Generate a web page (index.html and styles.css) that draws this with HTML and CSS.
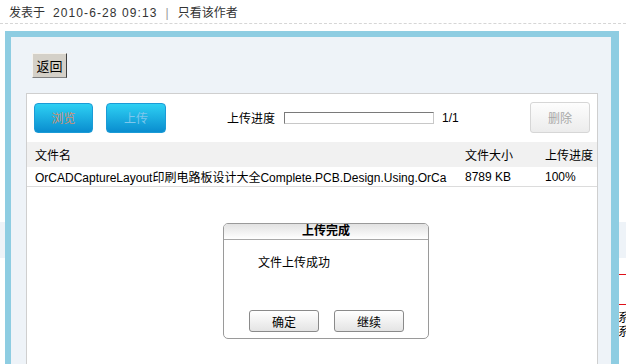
FILE: index.html
```html
<!DOCTYPE html>
<html lang="zh-CN">
<head>
<meta charset="utf-8">
<title>上传完成</title>
<link rel="stylesheet" href="styles.css">
</head>
<body>
<div class="backdrop">
  <div class="bd-band"></div>
  <div class="bd-line bd-line1"></div>
  <div class="bd-line bd-line2"></div>
  <div class="bd-text bd-t1">系</div>
  <div class="bd-text bd-t2">系</div>
</div>

<div class="meta">
  <span>发表于</span>
  <span class="date">2010-6-28 09:13</span>
  <span class="sep">|</span>
  <span>只看该作者</span>
</div>

<div class="frame">
  <button class="back-btn">返回</button>
  <div class="panel">
    <div class="toolbar">
      <button class="blue-btn browse">浏览</button>
      <button class="blue-btn upload">上传</button>
      <span class="prog-label">上传进度</span>
      <span class="prog-bar"></span>
      <span class="prog-count">1/1</span>
      <button class="del-btn">删除</button>
    </div>
    <div class="row head">
      <div class="cell name">文件名</div>
      <div class="cell size">文件大小</div>
      <div class="cell pct">上传进度</div>
    </div>
    <div class="row data">
      <div class="cell name"><span class="clip">OrCADCaptureLayout印刷电路板设计大全Complete.PCB.Design.Using.OrCa</span></div>
      <div class="cell size">8789 KB</div>
      <div class="cell pct">100%</div>
    </div>

    <div class="dialog">
      <div class="dlg-title">上传完成</div>
      <div class="dlg-msg">文件上传成功</div>
      <div class="dlg-actions">
        <button class="dlg-btn">确定</button>
        <button class="dlg-btn">继续</button>
      </div>
    </div>
  </div>
</div>
</body>
</html>
```

FILE: styles.css
```css
html, body {
  margin: 0;
  padding: 0;
}
body {
  width: 626px;
  height: 364px;
  overflow: hidden;
  position: relative;
  background: #fff;
  color: #000;
  font: 12px "Liberation Sans", "Noto Sans CJK SC", sans-serif;
}
button {
  font: inherit;
  padding: 0;
  margin: 0;
  cursor: default;
}

/* page content behind the frame */
.backdrop {
  position: absolute;
  left: 0;
  top: 0;
  width: 626px;
  height: 364px;
  z-index: 0;
  overflow: hidden;
}
.bd-band {
  position: absolute;
  left: 0;
  right: 0;
  top: 222px;
  height: 36px;
  background: #eef3f8;
}
.bd-line {
  position: absolute;
  left: 612px;
  right: 0;
  height: 1px;
  background: #e0101a;
}
.bd-line1 { top: 274px; }
.bd-line2 { top: 304px; }
.bd-text {
  position: absolute;
  left: 618px;
  font-size: 12px;
  line-height: 14px;
}
.bd-t1 { top: 311px; }
.bd-t2 { top: 325px; }

.meta {
  position: relative;
  z-index: 1;
  height: 20px;
  padding: 3px 0 0 9px;
  display: flex;
  align-items: center;
  line-height: 20px;
  color: #333;
  border-bottom: 1px dashed #d6d6d6;
  background: #fff;
}
.meta .date {
  margin-left: 8px;
  letter-spacing: 1.1px;
}
.meta .sep {
  margin: 0 9px 0 8px;
  color: #999;
}

.frame {
  position: relative;
  z-index: 1;
  margin: 7px 0 0 5px;
  width: 572px;
  height: 311px;
  border-top: 6px solid #8ecde2;
  border-left: 6px solid #8ecde2;
  border-right: 8px solid #8ecde2;
  background: #eef3f8;
  padding: 16px 13px 0 15px;
}

.back-btn {
  display: block;
  margin-left: 6px;
  width: 35px;
  height: 25px;
  background: #d4d0c8;
  border: 1px solid #d4d0c8;
  border-right-color: #404040;
  border-bottom-color: #808080;
  border-top-color: #f4f2ee;
  border-left-color: #f4f2ee;
  font-size: 13px;
  color: #000;
}

.panel {
  position: relative;
  margin-top: 15px;
  height: 270px;
  background: #fff;
  border: 1px solid #cfcfcf;
  border-bottom: none;
}

.toolbar {
  display: flex;
  align-items: center;
  height: 31px;
  padding: 8px 7px 0 7px;
}
.blue-btn {
  height: 30px;
  border: 1px solid #1b9bd6;
  border-radius: 4px;
  background: linear-gradient(#2ed0f3, #0a8dcf);
  font-size: 12px;
}
.browse {
  width: 59px;
  color: #d19071;
}
.upload {
  width: 60px;
  margin-left: 13px;
  color: #7fc6ec;
}
.prog-label {
  margin-left: 61px;
  color: #000;
}
.prog-bar {
  margin-left: 9px;
  width: 150px;
  height: 12px;
  box-sizing: border-box;
  background: #fff;
  border: 1px solid #c8c8c8;
  border-top-color: #7a7a7a;
  border-left-color: #7a7a7a;
}
.prog-count {
  margin-left: 8px;
}
.del-btn {
  margin-left: auto;
  width: 60px;
  height: 31px;
  border: 1px solid #d6d6d6;
  border-radius: 3px;
  background: linear-gradient(#fdfdfd, #ececec);
  color: #a8a8a8;
}

.row {
  display: grid;
  grid-template-columns: 430px 80px 1fr;
  align-items: center;
}
.row.head {
  margin-top: 9px;
  height: 25px;
  background: #f1f1f1;
}
.row.data {
  height: 19px;
  border-bottom: 1px solid #dcdcdc;
}
.cell {
  padding-left: 8px;
  white-space: nowrap;
  overflow: hidden;
}
.clip {
  display: block;
  width: 418px;
  overflow: hidden;
  white-space: nowrap;
}

.dialog {
  position: absolute;
  left: 196px;
  top: 129px;
  width: 206px;
  height: 116px;
  box-sizing: border-box;
  border: 1px solid #9a9a9a;
  border-radius: 5px;
  background: #fff;
  display: flex;
  flex-direction: column;
  overflow: hidden;
}
.dlg-title {
  height: 15px;
  line-height: 15px;
  text-align: center;
  font-weight: bold;
  background: linear-gradient(#e2e2e2, #ffffff);
  border-bottom: 1px solid #a8a8a8;
}
.dlg-msg {
  margin-top: 16px;
  padding-left: 34px;
  line-height: 14px;
}
.dlg-actions {
  margin-top: auto;
  display: flex;
  gap: 15px;
  padding: 0 0 6px 25px;
}
.dlg-btn {
  width: 70px;
  height: 22px;
  border: 1px solid #8a8a8a;
  border-radius: 3px;
  background: linear-gradient(#ffffff, #e4e4e4);
  color: #000;
}
```
